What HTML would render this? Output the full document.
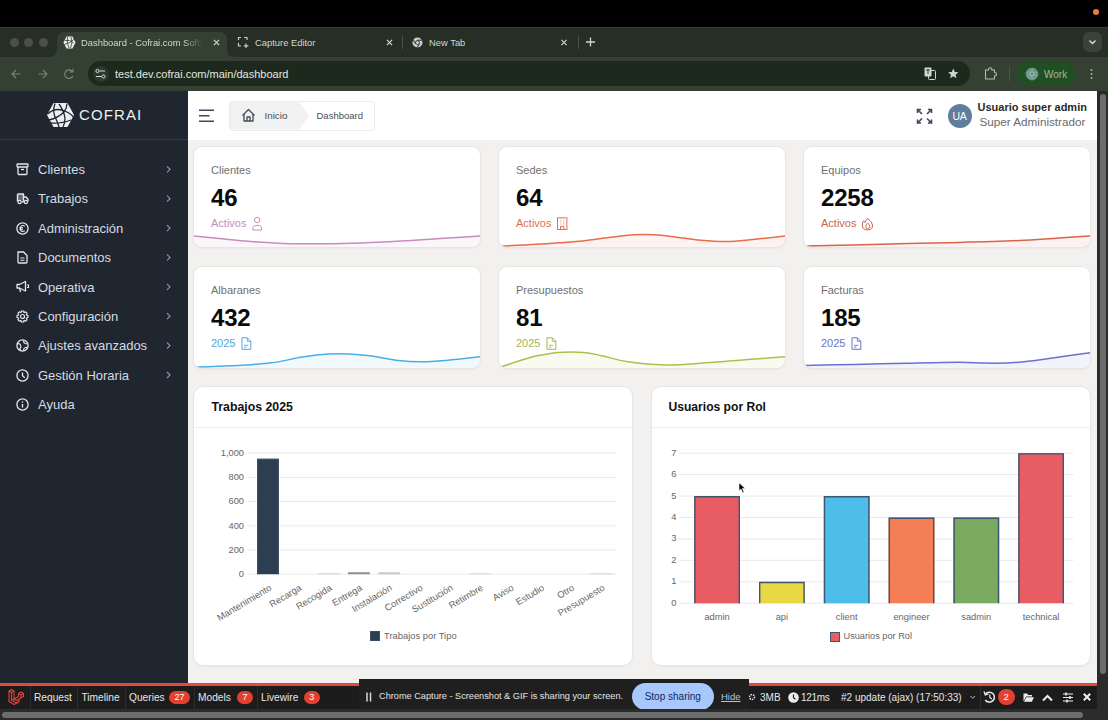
<!DOCTYPE html><html><head><meta charset="utf-8"><style>
*{box-sizing:border-box;margin:0;padding:0}
html,body{width:1108px;height:720px;overflow:hidden;background:#000;font-family:"Liberation Sans",sans-serif}
.a{position:absolute}
svg{position:absolute;overflow:visible}
.tabt{position:absolute;font-size:9.4px;color:#d3d8d1;white-space:nowrap}
.menu{position:absolute;left:38px;font-size:13px;color:#d6dbe1;white-space:nowrap}
.card{position:absolute;background:#fff;border:1px solid #e8e6e3;border-radius:9px;overflow:hidden;box-shadow:0 1px 2px rgba(0,0,0,0.04)}
.lbl{position:absolute;left:17px;top:17px;font-size:11px;color:#6f6f6f;white-space:nowrap}
.num{position:absolute;left:17px;top:36.5px;font-size:24px;font-weight:bold;color:#0b0b0b;letter-spacing:-0.2px}
.sub{position:absolute;left:17px;top:70px;font-size:11px;white-space:nowrap}
.dbt{position:absolute;top:692px;font-size:10.2px;color:#e6e6e6;white-space:nowrap}
.badge{position:absolute;top:691px;height:13px;border-radius:7px;background:#e3402f;color:#fff;font-size:9px;text-align:center;line-height:13px}
.yl{position:absolute;font-size:9.5px;color:#666;text-align:right;white-space:nowrap}
.xl{position:absolute;font-size:9.5px;color:#666;white-space:nowrap}
</style></head><body>
<div class="a" style="left:0;top:0;width:1108px;height:27px;background:#000"></div>
<div class="a" style="left:1093px;top:9px;width:6px;height:6px;border-radius:50%;background:#ee7c3c"></div>
<div class="a" style="left:0;top:27px;width:1108px;height:30px;background:#262e25"></div>
<div class="a" style="left:0;top:27px;width:1108px;height:1px;background:#363b35"></div>
<div class="a" style="left:0;top:57px;width:1108px;height:34px;background:#334032"></div>
<div class="a" style="left:9.5px;top:37.5px;width:9px;height:9px;border-radius:50%;background:#4d4f4b"></div>
<div class="a" style="left:24.0px;top:37.5px;width:9px;height:9px;border-radius:50%;background:#4d4f4b"></div>
<div class="a" style="left:38.5px;top:37.5px;width:9px;height:9px;border-radius:50%;background:#4d4f4b"></div>
<svg style="left:0;top:0" width="1108" height="91"><path d="M49,57 Q57,57 57,49 L57,40 Q57,32 65,32 L219,32 Q227,32 227,40 L227,49 Q227,57 235,57 Z" fill="#334032"/></svg>
<svg style="left:63px;top:36px" width="13" height="13" viewBox="0 0 26 26"><path d="M7,1 L19,1 L25,13 L19,25 L7,25 L1,13 Z" fill="#e8ebe7"/><path d="M4,9 Q13,6 21,14 M9,2 Q7,14 12,24 M3,17 Q14,14 23,6 M16,2 Q20,13 15,24" stroke="#333d33" stroke-width="1.6" fill="none"/></svg>
<div class="tabt" style="left:81px;top:36.5px;width:121px;overflow:hidden;-webkit-mask-image:linear-gradient(90deg,#000 85%,transparent)">Dashboard - Cofrai.com Software</div>
<svg style="left:0;top:0" width="1" height="1"><path d="M213.9,39.9 L219.1,45.1 M219.1,39.9 L213.9,45.1" stroke="#d0d5ce" stroke-width="1.2"/></svg>
<svg style="left:238px;top:37px" width="11" height="11"><path d="M0.5,3 L0.5,0.5 L3,0.5 M6,0.5 L9,0.5 L9,3 M0.5,6 L0.5,9 L3,9" stroke="#c9cec7" stroke-width="1.2" fill="none"/><path d="M8,6.5 L8,11 M5.8,8.8 L10.3,8.8" stroke="#c9cec7" stroke-width="1.2"/></svg>
<div class="tabt" style="left:255px;top:36.5px">Capture Editor</div>
<svg style="left:0;top:0" width="1" height="1"><path d="M386.9,39.9 L392.1,45.1 M392.1,39.9 L386.9,45.1" stroke="#d0d5ce" stroke-width="1.2"/></svg>
<div class="a" style="left:402px;top:36px;width:1px;height:13px;background:#4a5249"></div>
<svg style="left:412px;top:37px" width="11" height="11"><circle cx="5.5" cy="5.5" r="5" fill="#c9cec7"/><circle cx="5.5" cy="5.5" r="2.3" fill="#282e27"/><circle cx="5.5" cy="5.5" r="1.6" fill="#c9cec7"/><path d="M5.5,3.2 L10.3,3.2 M3.5,6.7 L1.2,2.6 M7.5,6.7 L5,10.6" stroke="#282e27" stroke-width="1"/></svg>
<div class="tabt" style="left:429px;top:36.5px">New Tab</div>
<svg style="left:0;top:0" width="1" height="1"><path d="M561.4,39.9 L566.6,45.1 M566.6,39.9 L561.4,45.1" stroke="#d0d5ce" stroke-width="1.2"/></svg>
<div class="a" style="left:578px;top:36px;width:1px;height:13px;background:#4a5249"></div>
<svg style="left:0;top:0" width="1" height="1"><path d="M590.5,37.5 L590.5,46.5 M586,42 L595,42" stroke="#d0d5ce" stroke-width="1.3"/></svg>
<div class="a" style="left:1083px;top:32px;width:19px;height:20px;border-radius:6px;background:#3a4239"></div>
<svg style="left:0;top:0" width="1" height="1"><path d="M1089.5,40.5 L1092.5,43.5 L1095.5,40.5" stroke="#d8dcd6" stroke-width="1.4" fill="none"/></svg>
<svg style="left:0;top:0" width="1" height="1"><path d="M12.5,74 L20.5,74 M16,70 L12,74 L16,78" stroke="#7b8179" stroke-width="1.1" fill="none"/><path d="M38.5,74 L46.5,74 M43,70 L47,74 L43,78" stroke="#7b8179" stroke-width="1.1" fill="none"/><path d="M72.6,71.8 A4.3,4.3 0 1 0 72.9,76" stroke="#838981" stroke-width="1.1" fill="none"/><path d="M73,68.8 L73,72 L69.8,72" stroke="#838981" stroke-width="1.1" fill="none"/></svg>
<div class="a" style="left:88px;top:61px;width:882px;height:25px;border-radius:12.5px;background:#1c291c"></div>
<div class="a" style="left:93px;top:65.5px;width:16px;height:16px;border-radius:50%;background:#2c382c"></div>
<svg style="left:0;top:0" width="1" height="1"><circle cx="97.5" cy="71" r="1.6" stroke="#d5dad3" stroke-width="1" fill="none"/><path d="M99.5,71 L105,71 M96,76.5 L101.5,76.5" stroke="#d5dad3" stroke-width="1.1"/><circle cx="103.5" cy="76.5" r="1.6" stroke="#d5dad3" stroke-width="1" fill="none"/></svg>
<div class="a" style="left:115px;top:67.5px;font-size:11px;color:#e2e7e0;white-space:nowrap">test.dev.cofrai.com/main/dashboard</div>
<svg style="left:0;top:0" width="1" height="1"><rect x="924.5" y="67.5" width="7" height="9" fill="#d0d5ce" rx="1"/><rect x="928.5" y="70.5" width="7" height="9" fill="none" stroke="#d0d5ce" stroke-width="1" rx="1"/><path d="M926,70 L930,70 M928,69 L928,74" stroke="#333" stroke-width="0.9"/><path d="M953.3,68.5 L954.8,72 L958.5,72.3 L955.6,74.7 L956.5,78.3 L953.3,76.3 L950.1,78.3 L951,74.7 L948.1,72.3 L951.8,72 Z" fill="#cfd4cd"/></svg>
<svg style="left:0;top:0" width="1" height="1"><path d="M985.5,70 L988.5,70 Q988.5,67.8 990.3,67.8 Q992,67.8 992,70 L994.5,70 L994.5,72.5 Q996.5,72.5 996.5,74.3 Q996.5,76 994.5,76 L994.5,79 L985.5,79 Z" stroke="#b5bab3" stroke-width="1.1" fill="none"/></svg>
<div class="a" style="left:1009px;top:67px;width:1px;height:14px;background:#4f584e"></div>
<div class="a" style="left:1017px;top:62px;width:58px;height:24px;border-radius:12px;background:#1f4f23"></div>
<svg style="left:1025px;top:67px" width="14" height="14"><circle cx="7" cy="7" r="6.5" fill="#5c8c7c"/><circle cx="7" cy="7" r="4.5" stroke="#c4d8d0" stroke-width="0.9" fill="none" stroke-dasharray="1.5 1"/><circle cx="7" cy="7" r="2.3" stroke="#c4d8d0" stroke-width="0.9" fill="none"/></svg>
<div class="a" style="left:1044px;top:68.5px;font-size:10px;color:#a7b4a4;white-space:nowrap">Work</div>
<svg style="left:0;top:0" width="1" height="1"><circle cx="1091.5" cy="70" r="1" fill="#a9aea7"/><circle cx="1091.5" cy="74" r="1" fill="#a9aea7"/><circle cx="1091.5" cy="78" r="1" fill="#a9aea7"/></svg>
<div class="a" style="left:0;top:91px;width:188px;height:592px;background:#1f2630"></div>
<div class="a" style="left:0;top:138.5px;width:188px;height:1px;background:#2f3c4d"></div>
<svg style="left:46px;top:102px" width="29" height="26" viewBox="0 0 29 26">
<path d="M7.5,1 L21.5,1 L28,13 L21.5,25 L7.5,25 L1,13 Z" fill="#ecedee"/>
<g stroke="#1f2630" stroke-width="1.3" fill="none">
<path d="M9,1.5 Q6,10 10,17 Q12,21 13,25"/>
<path d="M1.5,12 Q8,6 16,8 Q23,10 27.5,15"/>
<path d="M3,18 Q12,16 18,10 Q21,6 21,1.5"/>
<path d="M13,2 Q18,9 19,16 Q19,21 17,25"/>
<path d="M5,21 Q14,22 25,18"/>
</g></svg>
<div class="a" style="left:79px;top:106px;font-size:15px;color:#eef0f2;letter-spacing:1.1px;white-space:nowrap;font-weight:normal">COFRAI</div>
<svg style="left:15.5px;top:162.8px" width="13" height="13"><rect x="1" y="1" width="11" height="3" rx="0.8" stroke="#e4e8ec" stroke-width="1.3" fill="none"/><path d="M2,4 L2,10.5 Q2,11.5 3,11.5 L10,11.5 Q11,11.5 11,10.5 L11,4" stroke="#e4e8ec" stroke-width="1.3" fill="none"/><path d="M5,6.5 L8,6.5" stroke="#e4e8ec" stroke-width="1.3"/></svg>
<div class="menu" style="top:162.0px">Clientes</div>
<svg style="left:0;top:0" width="1" height="1"><path d="M167,166.3 L170,169.3 L167,172.3" stroke="#8f97bd" stroke-width="1.1" fill="none"/></svg>
<svg style="left:15.5px;top:192.2px" width="13" height="13"><path d="M1.5,9.5 L1.5,3 Q1.5,2 2.5,2 L7.5,2 L7.5,9.5 M7.5,5 L10,5 L12,7.3 L12,9.5" stroke="#e4e8ec" stroke-width="1.4" fill="none" stroke-linejoin="round"/><rect x="2" y="2.5" width="5" height="5.5" fill="#e4e8ec" opacity="0.35"/><path d="M5.2,9.8 L8.3,9.8" stroke="#e4e8ec" stroke-width="1.3"/><circle cx="3.6" cy="10" r="1.6" stroke="#e4e8ec" stroke-width="1.2" fill="#1f2630"/><circle cx="9.9" cy="10" r="1.6" stroke="#e4e8ec" stroke-width="1.2" fill="#1f2630"/></svg>
<div class="menu" style="top:191.4px">Trabajos</div>
<svg style="left:0;top:0" width="1" height="1"><path d="M167,195.7 L170,198.7 L167,201.7" stroke="#8f97bd" stroke-width="1.1" fill="none"/></svg>
<svg style="left:15.5px;top:221.6px" width="13" height="13"><circle cx="6.5" cy="6.5" r="5.6" stroke="#e4e8ec" stroke-width="1.3" fill="none"/><path d="M8.8,4.3 Q8,3.5 6.8,3.5 Q4.5,3.5 4.5,6.5 Q4.5,9.5 6.8,9.5 Q8,9.5 8.8,8.7 M3.3,5.8 L7,5.8 M3.3,7.3 L7,7.3" stroke="#e4e8ec" stroke-width="1.1" fill="none"/></svg>
<div class="menu" style="top:220.8px">Administración</div>
<svg style="left:0;top:0" width="1" height="1"><path d="M167,225.1 L170,228.1 L167,231.1" stroke="#8f97bd" stroke-width="1.1" fill="none"/></svg>
<svg style="left:15.5px;top:250.9px" width="13" height="13"><path d="M2,1 L7.5,1 L11,4.5 L11,11 Q11,12 10,12 L3,12 Q2,12 2,11 Z" stroke="#e4e8ec" stroke-width="1.3" fill="none"/><path d="M4.3,7 L8.5,7 M4.3,9.3 L8.5,9.3" stroke="#e4e8ec" stroke-width="1.1"/></svg>
<div class="menu" style="top:250.1px">Documentos</div>
<svg style="left:0;top:0" width="1" height="1"><path d="M167,254.4 L170,257.4 L167,260.4" stroke="#8f97bd" stroke-width="1.1" fill="none"/></svg>
<svg style="left:15.5px;top:280.3px" width="13" height="13"><path d="M1,4.5 L1,8 L3.5,8 L9.5,11 L9.5,1.5 L3.5,4.5 Z" stroke="#e4e8ec" stroke-width="1.3" fill="none" stroke-linejoin="round"/><path d="M3.5,8 L4.5,12" stroke="#e4e8ec" stroke-width="1.3"/><path d="M11,5 L12.5,5 L12.5,7.5 L11,7.5" stroke="#e4e8ec" stroke-width="1.1" fill="none"/></svg>
<div class="menu" style="top:279.5px">Operativa</div>
<svg style="left:0;top:0" width="1" height="1"><path d="M167,283.8 L170,286.8 L167,289.8" stroke="#8f97bd" stroke-width="1.1" fill="none"/></svg>
<svg style="left:15.5px;top:309.7px" width="13" height="13"><circle cx="6.5" cy="6.5" r="2" stroke="#e4e8ec" stroke-width="1.2" fill="none"/><path d="M5.5,1 L7.5,1 L8,2.6 L9.6,1.8 L11,3.2 L10.3,4.9 L12,5.5 L12,7.5 L10.3,8.1 L11,9.8 L9.6,11.2 L8,10.4 L7.5,12 L5.5,12 L5,10.4 L3.4,11.2 L2,9.8 L2.7,8.1 L1,7.5 L1,5.5 L2.7,4.9 L2,3.2 L3.4,1.8 L5,2.6 Z" stroke="#e4e8ec" stroke-width="1.2" fill="none" stroke-linejoin="round"/></svg>
<div class="menu" style="top:308.9px">Configuración</div>
<svg style="left:0;top:0" width="1" height="1"><path d="M167,313.2 L170,316.2 L167,319.2" stroke="#8f97bd" stroke-width="1.1" fill="none"/></svg>
<svg style="left:15.5px;top:339.1px" width="13" height="13"><circle cx="6.5" cy="6.5" r="5.6" stroke="#e4e8ec" stroke-width="1.3" fill="none"/><path d="M1.5,5 Q3.5,4 4.5,6 Q5.5,8 4,9.5 L4.5,11.5 M8,1.3 Q7,3.5 9,4.5 Q11,5 11.8,4.5 M7.5,11.8 Q7.5,9 9.5,8.5 Q11,8.3 11.5,9" stroke="#e4e8ec" stroke-width="1.2" fill="none"/></svg>
<div class="menu" style="top:338.3px">Ajustes avanzados</div>
<svg style="left:0;top:0" width="1" height="1"><path d="M167,342.6 L170,345.6 L167,348.6" stroke="#8f97bd" stroke-width="1.1" fill="none"/></svg>
<svg style="left:15.5px;top:368.5px" width="13" height="13"><circle cx="6.5" cy="6.5" r="5.6" stroke="#e4e8ec" stroke-width="1.3" fill="none"/><path d="M6.5,3.5 L6.5,6.8 L8.8,8.8" stroke="#e4e8ec" stroke-width="1.3" fill="none"/></svg>
<div class="menu" style="top:367.7px">Gestión Horaria</div>
<svg style="left:0;top:0" width="1" height="1"><path d="M167,372.0 L170,375.0 L167,378.0" stroke="#8f97bd" stroke-width="1.1" fill="none"/></svg>
<svg style="left:15.5px;top:397.8px" width="13" height="13"><circle cx="6.5" cy="6.5" r="5.6" stroke="#e4e8ec" stroke-width="1.3" fill="none"/><path d="M6.5,6 L6.5,9.5" stroke="#e4e8ec" stroke-width="1.4"/><circle cx="6.5" cy="4" r="0.8" fill="#e4e8ec"/></svg>
<div class="menu" style="top:397.0px">Ayuda</div>
<div class="a" style="left:188px;top:91px;width:909px;height:592px;background:#f2f1ef"></div>
<div class="a" style="left:188px;top:91px;width:909px;height:49px;background:#fff"></div>
<svg style="left:0;top:0" width="1" height="1"><path d="M199,110.3 L214,110.3 M199,115.8 L209.5,115.8 M199,121.2 L214,121.2" stroke="#3b4a5c" stroke-width="1.6"/></svg>
<div class="a" style="left:229px;top:100.5px;width:146px;height:30px;border:1px solid #ebebeb;border-radius:4px;background:#fff"></div>
<svg style="left:0;top:0" width="1" height="1"><path d="M230,101.5 L299,101.5 L309,115.5 L299,129.5 L230,129.5 Z" fill="#f1f1f1"/></svg>
<svg style="left:0;top:0" width="1" height="1"><path d="M242.5,115.5 L248.5,109.5 L254.5,115.5 M244,114 L244,121 L253,121 L253,114 M247,121 L247,117 L250,117 L250,121" stroke="#3d4b5b" stroke-width="1.3" fill="none" stroke-linejoin="round"/></svg>
<div class="a" style="left:264.5px;top:110px;font-size:9.8px;color:#4d4d4d;white-space:nowrap">Inicio</div>
<div class="a" style="left:316.5px;top:110px;font-size:9.5px;color:#4d4d4d;white-space:nowrap">Dashboard</div>
<svg style="left:0;top:0" width="1" height="1"><g stroke="#3b4a5c" stroke-width="1.6" fill="none"><path d="M917.5,109.5 L922,114 M917.5,113 L917.5,109.5 L921,109.5"/><path d="M931.5,109.5 L927,114 M928,109.5 L931.5,109.5 L931.5,113"/><path d="M917.5,123 L922,118.5 M917.5,119.5 L917.5,123 L921,123"/><path d="M931.5,123 L927,118.5 M928,123 L931.5,123 L931.5,119.5"/></g></svg>
<div class="a" style="left:947.5px;top:103.5px;width:24px;height:24px;border-radius:50%;background:#5f7d9c;color:#fff;font-size:10.5px;text-align:center;line-height:24px;letter-spacing:-0.3px">UA</div>
<div class="a" style="left:977.5px;top:101px;font-size:11px;font-weight:bold;color:#2b2b2b;white-space:nowrap">Usuario super admin</div>
<div class="a" style="left:979.5px;top:114.8px;font-size:11.7px;color:#6b6b6b;white-space:nowrap">Super Administrador</div>
<div class="card" style="left:193px;top:146px;width:288px;height:102px">
<svg class="spark" style="left:-1px;top:-1px" width="290" height="104"><path d="M0.0,89.9 C4.3,90.3 17.3,91.6 26.0,92.5 C34.7,93.4 41.2,94.3 52.0,95.1 C62.8,95.9 78.0,97.0 91.0,97.4 C104.0,97.8 117.0,97.8 130.0,97.7 C143.0,97.6 156.0,97.3 169.0,96.9 C182.0,96.5 195.0,95.8 208.0,95.1 C221.0,94.4 233.3,93.4 247.0,92.5 C260.7,91.6 282.8,90.2 290.0,89.7 L290,104 L0,104 Z" fill="#c98bc0" fill-opacity="0.08"/><path d="M0.0,89.9 C4.3,90.3 17.3,91.6 26.0,92.5 C34.7,93.4 41.2,94.3 52.0,95.1 C62.8,95.9 78.0,97.0 91.0,97.4 C104.0,97.8 117.0,97.8 130.0,97.7 C143.0,97.6 156.0,97.3 169.0,96.9 C182.0,96.5 195.0,95.8 208.0,95.1 C221.0,94.4 233.3,93.4 247.0,92.5 C260.7,91.6 282.8,90.2 290.0,89.7" stroke="#c98bc0" stroke-width="1.5" fill="none"/></svg>
<div class="lbl" style="top:17px">Clientes</div>
<div class="num" style="top:36.5px">46</div>
<div class="sub" style="color:#c68cbf;top:70px">Activos</div>
<svg style="left:58px;top:69.5px" width="11" height="14"><circle cx="5.2" cy="3" r="2.7" stroke="#c68cbf" stroke-width="1" fill="none"/><path d="M0.8,13 Q0.2,8.3 5.2,8.3 Q10.2,8.3 9.6,13 Z" stroke="#c68cbf" stroke-width="1" fill="none" stroke-linejoin="round"/></svg>
</div>
<div class="card" style="left:498px;top:146px;width:288px;height:102px">
<svg class="spark" style="left:-1px;top:-1px" width="290" height="104"><path d="M0.0,100.2 C6.5,99.9 26.0,99.0 39.0,98.2 C52.0,97.4 66.3,96.7 78.0,95.6 C89.7,94.5 99.7,92.8 109.2,91.7 C118.7,90.6 127.4,89.3 135.2,88.8 C143.0,88.3 149.1,88.4 156.0,88.8 C162.9,89.2 169.0,90.0 176.8,90.9 C184.6,91.8 194.2,93.5 202.8,94.3 C211.5,95.1 220.0,95.7 228.7,95.6 C237.3,95.5 244.5,94.5 254.7,93.5 C264.9,92.5 284.1,90.3 290.0,89.7 L290,104 L0,104 Z" fill="#e96c4b" fill-opacity="0.08"/><path d="M0.0,100.2 C6.5,99.9 26.0,99.0 39.0,98.2 C52.0,97.4 66.3,96.7 78.0,95.6 C89.7,94.5 99.7,92.8 109.2,91.7 C118.7,90.6 127.4,89.3 135.2,88.8 C143.0,88.3 149.1,88.4 156.0,88.8 C162.9,89.2 169.0,90.0 176.8,90.9 C184.6,91.8 194.2,93.5 202.8,94.3 C211.5,95.1 220.0,95.7 228.7,95.6 C237.3,95.5 244.5,94.5 254.7,93.5 C264.9,92.5 284.1,90.3 290.0,89.7" stroke="#e96c4b" stroke-width="1.5" fill="none"/></svg>
<div class="lbl" style="top:17px">Sedes</div>
<div class="num" style="top:36.5px">64</div>
<div class="sub" style="color:#e2704f;top:70px">Activos</div>
<svg style="left:58px;top:70px" width="11" height="13"><rect x="0.5" y="0.8" width="9.4" height="11.7" stroke="#e2704f" stroke-width="1" fill="none"/><path d="M3.2,3 L4.4,3 M6,3 L7.2,3 M3.2,5 L4.4,5 M6,5 L7.2,5 M3.2,7 L4.4,7 M6,7 L7.2,7" stroke="#e2704f" stroke-width="0.9" stroke-opacity="0.7"/><path d="M3.5,12.5 L3.5,9.5 L6.9,9.5 L6.9,12.5" stroke="#e2704f" stroke-width="1" fill="none"/></svg>
</div>
<div class="card" style="left:803px;top:146px;width:288px;height:102px">
<svg class="spark" style="left:-1px;top:-1px" width="290" height="104"><path d="M0.0,100.1 C13.0,99.8 52.0,98.8 78.0,98.2 C104.0,97.6 132.2,97.1 156.0,96.4 C179.8,95.8 203.7,95.1 221.0,94.3 C238.3,93.5 248.5,92.5 260.0,91.7 C271.5,90.9 285.0,90.0 290.0,89.7 L290,104 L0,104 Z" fill="#d8654a" fill-opacity="0.08"/><path d="M0.0,100.1 C13.0,99.8 52.0,98.8 78.0,98.2 C104.0,97.6 132.2,97.1 156.0,96.4 C179.8,95.8 203.7,95.1 221.0,94.3 C238.3,93.5 248.5,92.5 260.0,91.7 C271.5,90.9 285.0,90.0 290.0,89.7" stroke="#d8654a" stroke-width="1.5" fill="none"/></svg>
<div class="lbl" style="top:17px">Equipos</div>
<div class="num" style="top:36.5px">2258</div>
<div class="sub" style="color:#c9664b;top:70px">Activos</div>
<svg style="left:57.5px;top:70.5px" width="12" height="13"><path d="M5.5,0.6 Q9.8,3.3 10.5,6.8 Q11,11.9 5.5,11.9 Q0.2,11.9 0.3,7 Q0.4,4.5 1.5,2.8 L3,4.6 Q3.8,2 5.5,0.6 Z" stroke="#c9664b" stroke-width="1" fill="none" stroke-linejoin="round"/><path d="M5.7,5 Q8.2,7 7.8,9 Q7.4,10.6 5.6,10.6 Q3.7,10.6 3.7,8.9 Q3.7,7 5.7,5 Z" stroke="#c9664b" stroke-width="0.9" fill="none"/></svg>
</div>
<div class="card" style="left:193px;top:265.5px;width:288px;height:103px">
<svg class="spark" style="left:-1px;top:-1px" width="290" height="104"><path d="M0.0,101.1 C6.5,100.9 26.0,100.4 39.0,99.7 C52.0,99.0 66.3,98.2 78.0,96.8 C89.7,95.4 99.7,92.6 109.2,91.1 C118.7,89.6 127.4,88.5 135.2,88.0 C143.0,87.5 149.1,87.7 156.0,88.0 C162.9,88.3 169.0,88.8 176.8,89.8 C184.6,90.8 194.2,93.2 202.8,94.2 C211.5,95.2 220.0,95.8 228.7,95.8 C237.3,95.8 244.5,95.1 254.7,94.2 C264.9,93.3 284.1,91.0 290.0,90.4 L290,104 L0,104 Z" fill="#4aaee6" fill-opacity="0.08"/><path d="M0.0,101.1 C6.5,100.9 26.0,100.4 39.0,99.7 C52.0,99.0 66.3,98.2 78.0,96.8 C89.7,95.4 99.7,92.6 109.2,91.1 C118.7,89.6 127.4,88.5 135.2,88.0 C143.0,87.5 149.1,87.7 156.0,88.0 C162.9,88.3 169.0,88.8 176.8,89.8 C184.6,90.8 194.2,93.2 202.8,94.2 C211.5,95.2 220.0,95.8 228.7,95.8 C237.3,95.8 244.5,95.1 254.7,94.2 C264.9,93.3 284.1,91.0 290.0,90.4" stroke="#4aaee6" stroke-width="1.5" fill="none"/></svg>
<div class="lbl" style="top:17.6px">Albaranes</div>
<div class="num" style="top:37.1px">432</div>
<div class="sub" style="color:#4ea9e0;top:70.8px">2025</div>
<svg style="left:46.5px;top:70px" width="11" height="13"><path d="M1,0.8 L6.3,0.8 L9.8,4.3 L9.8,12.3 L1,12.3 Z" stroke="#4ea9e0" stroke-width="1" fill="none" stroke-linejoin="round"/><path d="M6.3,0.8 L6.3,4.3 L9.8,4.3" stroke="#4ea9e0" stroke-width="0.9" fill="none"/><path d="M3,8.3 L7.3,8.3 M3,10.2 L5.3,10.2" stroke="#4ea9e0" stroke-width="0.9" fill="none"/></svg>
</div>
<div class="card" style="left:498px;top:265.5px;width:288px;height:103px">
<svg class="spark" style="left:-1px;top:-1px" width="290" height="104"><path d="M0.0,101.9 C3.5,100.7 14.3,97.0 20.8,95.0 C27.3,93.0 32.5,91.2 39.0,89.8 C45.5,88.4 52.0,87.0 59.8,86.4 C67.6,85.8 78.4,85.8 85.8,86.4 C93.2,87.0 96.6,88.2 104.0,89.8 C111.4,91.4 119.6,94.3 130.0,95.8 C140.4,97.3 153.4,98.7 166.4,98.9 C179.4,99.1 194.6,97.7 208.0,96.8 C221.4,95.9 233.3,94.8 247.0,93.7 C260.7,92.6 282.8,91.0 290.0,90.4 L290,104 L0,104 Z" fill="#b3bd4a" fill-opacity="0.08"/><path d="M0.0,101.9 C3.5,100.7 14.3,97.0 20.8,95.0 C27.3,93.0 32.5,91.2 39.0,89.8 C45.5,88.4 52.0,87.0 59.8,86.4 C67.6,85.8 78.4,85.8 85.8,86.4 C93.2,87.0 96.6,88.2 104.0,89.8 C111.4,91.4 119.6,94.3 130.0,95.8 C140.4,97.3 153.4,98.7 166.4,98.9 C179.4,99.1 194.6,97.7 208.0,96.8 C221.4,95.9 233.3,94.8 247.0,93.7 C260.7,92.6 282.8,91.0 290.0,90.4" stroke="#b3bd4a" stroke-width="1.5" fill="none"/></svg>
<div class="lbl" style="top:17.6px">Presupuestos</div>
<div class="num" style="top:37.1px">81</div>
<div class="sub" style="color:#a8b44c;top:70.8px">2025</div>
<svg style="left:46.5px;top:70px" width="11" height="13"><path d="M1,0.8 L6.3,0.8 L9.8,4.3 L9.8,12.3 L1,12.3 Z" stroke="#a8b44c" stroke-width="1" fill="none" stroke-linejoin="round"/><path d="M6.3,0.8 L6.3,4.3 L9.8,4.3" stroke="#a8b44c" stroke-width="0.9" fill="none"/><path d="M3,8.3 L7.3,8.3 M3,10.2 L5.3,10.2" stroke="#a8b44c" stroke-width="0.9" fill="none"/></svg>
</div>
<div class="card" style="left:803px;top:265.5px;width:288px;height:103px">
<svg class="spark" style="left:-1px;top:-1px" width="290" height="104"><path d="M0.0,99.5 C8.7,99.3 34.7,98.8 52.0,98.4 C69.3,98.0 86.7,97.7 104.0,97.3 C121.3,96.9 143.0,96.3 156.0,96.3 C169.0,96.3 173.3,97.0 182.0,97.1 C190.7,97.2 199.3,97.3 208.0,96.8 C216.7,96.3 225.3,95.2 234.0,94.2 C242.7,93.2 250.7,91.9 260.0,90.6 C269.3,89.3 285.0,86.9 290.0,86.2 L290,104 L0,104 Z" fill="#6b6fd2" fill-opacity="0.08"/><path d="M0.0,99.5 C8.7,99.3 34.7,98.8 52.0,98.4 C69.3,98.0 86.7,97.7 104.0,97.3 C121.3,96.9 143.0,96.3 156.0,96.3 C169.0,96.3 173.3,97.0 182.0,97.1 C190.7,97.2 199.3,97.3 208.0,96.8 C216.7,96.3 225.3,95.2 234.0,94.2 C242.7,93.2 250.7,91.9 260.0,90.6 C269.3,89.3 285.0,86.9 290.0,86.2" stroke="#6b6fd2" stroke-width="1.5" fill="none"/></svg>
<div class="lbl" style="top:17.6px">Facturas</div>
<div class="num" style="top:37.1px">185</div>
<div class="sub" style="color:#6c70c8;top:70.8px">2025</div>
<svg style="left:46.5px;top:70px" width="11" height="13"><path d="M1,0.8 L6.3,0.8 L9.8,4.3 L9.8,12.3 L1,12.3 Z" stroke="#6c70c8" stroke-width="1" fill="none" stroke-linejoin="round"/><path d="M6.3,0.8 L6.3,4.3 L9.8,4.3" stroke="#6c70c8" stroke-width="0.9" fill="none"/><path d="M3,8.3 L7.3,8.3 M3,10.2 L5.3,10.2" stroke="#6c70c8" stroke-width="0.9" fill="none"/></svg>
</div>
<div class="card" style="left:193px;top:386.4px;width:440px;height:280px;border-radius:10px"></div>
<div class="a" style="left:194px;top:427px;width:438px;height:1px;background:#f0efed"></div>
<div class="card" style="left:651px;top:386.4px;width:440px;height:280px;border-radius:10px"></div>
<div class="a" style="left:652px;top:427px;width:438px;height:1px;background:#f0efed"></div>
<div class="a" style="left:211.5px;top:399.5px;font-size:12.3px;font-weight:bold;color:#111;white-space:nowrap">Trabajos 2025</div>
<div class="a" style="left:668.5px;top:399.5px;font-size:12.1px;font-weight:bold;color:#111;white-space:nowrap">Usuarios por Rol</div>
<svg style="left:0;top:0" width="1" height="1"><path d="M247.5,574.2 L616.5,574.2" stroke="#e9e9e9" stroke-width="1"/><path d="M247.5,550.0 L616.5,550.0" stroke="#e9e9e9" stroke-width="1"/><path d="M247.5,525.8 L616.5,525.8" stroke="#e9e9e9" stroke-width="1"/><path d="M247.5,501.5 L616.5,501.5" stroke="#e9e9e9" stroke-width="1"/><path d="M247.5,477.3 L616.5,477.3" stroke="#e9e9e9" stroke-width="1"/><path d="M247.5,453.1 L616.5,453.1" stroke="#e9e9e9" stroke-width="1"/><rect x="257.0" y="458.8" width="21.8" height="115.4" fill="#2c3e50"/><path d="M257.6,574.2 L257.6,459.4 L278.3,459.4 L278.3,574.2" stroke="#3b4f66" stroke-width="1.2" fill="none"/><rect x="317.7" y="573.0" width="21.8" height="1.2" fill="#2c3e50" fill-opacity="0.15"/><rect x="348.0" y="572.2" width="21.8" height="2" fill="#2c3e50" fill-opacity="0.55"/><rect x="378.4" y="572.2" width="21.8" height="2" fill="#2c3e50" fill-opacity="0.25"/><rect x="469.4" y="573.0" width="21.8" height="1.2" fill="#2c3e50" fill-opacity="0.12"/><rect x="590.7" y="573.0" width="21.8" height="1.2" fill="#2c3e50" fill-opacity="0.12"/></svg>
<div class="yl" style="left:200px;width:44px;top:569.0px;font-size:9.3px">0</div>
<div class="yl" style="left:200px;width:44px;top:544.8px;font-size:9.3px">200</div>
<div class="yl" style="left:200px;width:44px;top:520.6px;font-size:9.3px">400</div>
<div class="yl" style="left:200px;width:44px;top:496.3px;font-size:9.3px">600</div>
<div class="yl" style="left:200px;width:44px;top:472.1px;font-size:9.3px">800</div>
<div class="yl" style="left:200px;width:44px;top:447.9px;font-size:9.3px">1,000</div>
<div class="xl" style="right:838.0px;top:580.6px;transform-origin:100% 50%;transform:rotate(-31deg);font-size:9.4px">Mantenimiento</div>
<div class="xl" style="right:807.7px;top:580.6px;transform-origin:100% 50%;transform:rotate(-31deg);font-size:9.4px">Recarga</div>
<div class="xl" style="right:777.4px;top:580.6px;transform-origin:100% 50%;transform:rotate(-31deg);font-size:9.4px">Recogida</div>
<div class="xl" style="right:747.0px;top:580.6px;transform-origin:100% 50%;transform:rotate(-31deg);font-size:9.4px">Entrega</div>
<div class="xl" style="right:716.7px;top:580.6px;transform-origin:100% 50%;transform:rotate(-31deg);font-size:9.4px">Instalación</div>
<div class="xl" style="right:686.4px;top:580.6px;transform-origin:100% 50%;transform:rotate(-31deg);font-size:9.4px">Correctivo</div>
<div class="xl" style="right:656.1px;top:580.6px;transform-origin:100% 50%;transform:rotate(-31deg);font-size:9.4px">Sustitución</div>
<div class="xl" style="right:625.7px;top:580.6px;transform-origin:100% 50%;transform:rotate(-31deg);font-size:9.4px">Retimbre</div>
<div class="xl" style="right:595.4px;top:580.6px;transform-origin:100% 50%;transform:rotate(-31deg);font-size:9.4px">Aviso</div>
<div class="xl" style="right:565.1px;top:580.6px;transform-origin:100% 50%;transform:rotate(-31deg);font-size:9.4px">Estudio</div>
<div class="xl" style="right:534.7px;top:580.6px;transform-origin:100% 50%;transform:rotate(-31deg);font-size:9.4px">Otro</div>
<div class="xl" style="right:504.4px;top:580.6px;transform-origin:100% 50%;transform:rotate(-31deg);font-size:9.4px">Presupuesto</div>
<div class="a" style="left:370px;top:631.3px;width:10px;height:10px;background:#2c3e50;border:1px solid #3a4e64"></div>
<div class="xl" style="left:384px;top:630px;font-size:9.4px">Trabajos por Tipo</div>
<svg style="left:0;top:0" width="1" height="1"><path d="M679,603.2 L1073.5,603.2" stroke="#e9e9e9" stroke-width="1"/><path d="M679,581.8 L1073.5,581.8" stroke="#e9e9e9" stroke-width="1"/><path d="M679,560.3 L1073.5,560.3" stroke="#e9e9e9" stroke-width="1"/><path d="M679,538.9 L1073.5,538.9" stroke="#e9e9e9" stroke-width="1"/><path d="M679,517.5 L1073.5,517.5" stroke="#e9e9e9" stroke-width="1"/><path d="M679,496.1 L1073.5,496.1" stroke="#e9e9e9" stroke-width="1"/><path d="M679,474.6 L1073.5,474.6" stroke="#e9e9e9" stroke-width="1"/><path d="M679,453.2 L1073.5,453.2" stroke="#e9e9e9" stroke-width="1"/><rect x="694.2" y="496.1" width="45.8" height="107.2" fill="#e85d63"/><path d="M694.9,603.2 L694.9,496.8 L739.3,496.8 L739.3,603.2" stroke="#3e5670" stroke-width="1.4" fill="none"/><rect x="759.0" y="581.8" width="45.8" height="21.4" fill="#e8d944"/><path d="M759.7,603.2 L759.7,582.5 L804.1,582.5 L804.1,603.2" stroke="#3e5670" stroke-width="1.4" fill="none"/><rect x="823.8" y="496.1" width="45.8" height="107.2" fill="#4dbde9"/><path d="M824.5,603.2 L824.5,496.8 L868.9,496.8 L868.9,603.2" stroke="#3e5670" stroke-width="1.4" fill="none"/><rect x="888.6" y="517.5" width="45.8" height="85.7" fill="#f47f56"/><path d="M889.3,603.2 L889.3,518.2 L933.7,518.2 L933.7,603.2" stroke="#3e5670" stroke-width="1.4" fill="none"/><rect x="953.4" y="517.5" width="45.8" height="85.7" fill="#79aa60"/><path d="M954.1,603.2 L954.1,518.2 L998.5,518.2 L998.5,603.2" stroke="#3e5670" stroke-width="1.4" fill="none"/><rect x="1018.2" y="453.2" width="45.8" height="150.0" fill="#e85d63"/><path d="M1018.9,603.2 L1018.9,453.9 L1063.3,453.9 L1063.3,603.2" stroke="#3e5670" stroke-width="1.4" fill="none"/></svg>
<div class="yl" style="left:640.5px;width:36px;top:596.7px;font-size:9.4px">0</div>
<div class="yl" style="left:640.5px;width:36px;top:575.3px;font-size:9.4px">1</div>
<div class="yl" style="left:640.5px;width:36px;top:553.8px;font-size:9.4px">2</div>
<div class="yl" style="left:640.5px;width:36px;top:532.4px;font-size:9.4px">3</div>
<div class="yl" style="left:640.5px;width:36px;top:511.0px;font-size:9.4px">4</div>
<div class="yl" style="left:640.5px;width:36px;top:489.6px;font-size:9.4px">5</div>
<div class="yl" style="left:640.5px;width:36px;top:468.1px;font-size:9.4px">6</div>
<div class="yl" style="left:640.5px;width:36px;top:446.7px;font-size:9.4px">7</div>
<div class="xl" style="left:677.1px;width:80px;text-align:center;top:611.9px;font-size:9.3px">admin</div>
<div class="xl" style="left:741.9px;width:80px;text-align:center;top:611.9px;font-size:9.3px">api</div>
<div class="xl" style="left:806.7px;width:80px;text-align:center;top:611.9px;font-size:9.3px">client</div>
<div class="xl" style="left:871.5px;width:80px;text-align:center;top:611.9px;font-size:9.3px">engineer</div>
<div class="xl" style="left:936.3px;width:80px;text-align:center;top:611.9px;font-size:9.3px">sadmin</div>
<div class="xl" style="left:1001.1px;width:80px;text-align:center;top:611.9px;font-size:9.3px">technical</div>
<div class="a" style="left:830px;top:631.5px;width:10px;height:10px;background:#e85d63;border:1.5px solid #3e5670"></div>
<div class="xl" style="left:843.5px;top:630.5px;font-size:9.2px">Usuarios por Rol</div>
<svg style="left:0;top:0" width="1" height="1"><path d="M739,482.8 L739,490.8 L741,488.9 L742.6,492.8 L744,492.2 L742.4,488.4 L745.2,488.4 Z" fill="#000" stroke="#fff" stroke-width="0.6" stroke-linejoin="round"/></svg>
<div class="a" style="left:0;top:683px;width:1097px;height:3px;background:#e8473a"></div>
<div class="a" style="left:0;top:686px;width:1097px;height:23px;background:#1c1c1c"></div>
<svg style="left:7.5px;top:688.5px" width="17" height="17" viewBox="0 0 17 17"><g stroke="#e0443a" stroke-width="1.1" fill="none" stroke-linejoin="round"><path d="M1,2 L3.5,0.6 L6,2 L6,10 L10.5,7.5 L10.5,4.5 L13,3 L15.5,4.5 L15.5,7.5 L11,10 L11,12.8 L6.2,15.5 L1,12.5 Z"/><path d="M1,2 L3.5,3.4 L6,2 M3.5,3.4 L3.5,11.2 L6,10 M3.5,11.2 L8.5,14 L11,12.8 M10.5,4.5 L13,6 L15.5,4.5 M13,6 L13,8.8 M6,10 L8.5,11.5 L11,10"/></g></svg>
<div class="a" style="left:30px;top:686px;width:1px;height:23px;background:#2c2c2c"></div>
<div class="a" style="left:76.5px;top:686px;width:1px;height:23px;background:#2c2c2c"></div>
<div class="a" style="left:124.5px;top:686px;width:1px;height:23px;background:#2c2c2c"></div>
<div class="a" style="left:193.5px;top:686px;width:1px;height:23px;background:#2c2c2c"></div>
<div class="a" style="left:256.5px;top:686px;width:1px;height:23px;background:#2c2c2c"></div>
<div class="dbt" style="left:34px">Request</div>
<div class="dbt" style="left:81.5px">Timeline</div>
<div class="dbt" style="left:129px">Queries</div>
<div class="dbt" style="left:198px">Models</div>
<div class="dbt" style="left:261px">Livewire</div>
<div class="badge" style="left:169px;width:21px">27</div>
<div class="badge" style="left:237px;width:16px">7</div>
<div class="badge" style="left:303.5px;width:16.5px">3</div>
<svg style="left:0;top:0" width="1" height="1"><circle cx="752" cy="697" r="2.5" stroke="#e6e6e6" stroke-width="1.5" fill="none" stroke-dasharray="1.5 1"/></svg>
<div class="dbt" style="left:760px;font-size:10px">3MB</div>
<svg style="left:788px;top:691.5px" width="11" height="11"><circle cx="5.5" cy="5.5" r="5.3" fill="#ececec"/><path d="M5.5,2.5 L5.5,5.8 L7.5,7.3" stroke="#1c1c1c" stroke-width="1.2" fill="none"/></svg>
<div class="dbt" style="left:801px;font-size:10px;letter-spacing:-0.3px">121ms</div>
<div class="dbt" style="left:841px;font-size:10px">#2 update (ajax) (17:50:33)</div>
<svg style="left:0;top:0" width="1" height="1"><path d="M970.5,696 L972.8,698.3 L975.1,696" stroke="#bdbdbd" stroke-width="1" fill="none"/></svg>
<div class="a" style="left:980px;top:686px;width:1px;height:23px;background:#2c2c2c"></div>
<svg style="left:0;top:0" width="1" height="1"><path d="M985.5,694 A5,5 0 1 1 985.3,700" stroke="#ececec" stroke-width="1.5" fill="none"/><path d="M984,691.5 L985.3,695 L988.5,694" stroke="#ececec" stroke-width="1.3" fill="none"/><path d="M989.8,694.5 L989.8,697.5 L991.8,699" stroke="#ececec" stroke-width="1.2" fill="none"/></svg>
<div class="badge" style="left:998px;width:16.5px;top:689px;height:16px;border-radius:8px;line-height:16px;font-size:9.5px">2</div>
<svg style="left:0;top:0" width="1" height="1"><path d="M1023.5,693.5 L1027,693.5 L1028.3,695 L1032,695 L1032,696.5 L1026,696.5 L1023.5,701.5 Z" fill="#ececec"/><path d="M1026.3,697.3 L1034,697.3 L1031.8,701.8 L1024,701.8 Z" fill="#ececec"/></svg>
<svg style="left:0;top:0" width="1" height="1"><path d="M1043,700.5 L1047.5,696 L1052,700.5" stroke="#ececec" stroke-width="2" fill="none"/></svg>
<svg style="left:0;top:0" width="1" height="1"><path d="M1063,694 L1073,694 M1063,697.5 L1073,697.5 M1063,701 L1073,701" stroke="#ececec" stroke-width="1.2"/><path d="M1066,692.5 L1066,695.5 M1070,696 L1070,699 M1067,699.5 L1067,702.5" stroke="#ececec" stroke-width="1.6"/></svg>
<svg style="left:0;top:0" width="1" height="1"><path d="M1083.8,693.8 L1090.2,700.2 M1090.2,693.8 L1083.8,700.2" stroke="#f0f0f0" stroke-width="2"/></svg>
<div class="a" style="left:359px;top:679px;width:390px;height:34.5px;background:#1f1f1f"></div>
<svg style="left:0;top:0" width="1" height="1"><path d="M367,692.5 L367,701.5 M370.5,692.5 L370.5,701.5" stroke="#d8d8d8" stroke-width="1.5"/></svg>
<div class="a" style="left:379px;top:691px;font-size:9.2px;color:#e3e3e3;white-space:nowrap">Chrome Capture - Screenshot &amp; GIF is sharing your screen.</div>
<div class="a" style="left:631.5px;top:683px;width:82.5px;height:27px;border-radius:13.5px;background:#a8c7fa;color:#0a2b5e;font-size:10px;text-align:center;line-height:27px">Stop sharing</div>
<div class="a" style="left:721px;top:691px;font-size:9.5px;color:#a8c7fa;text-decoration:underline;white-space:nowrap">Hide</div>
<div class="a" style="left:1097px;top:91px;width:11px;height:629px;background:#2b2b2b"></div>
<div class="a" style="left:1099.5px;top:93.5px;width:6px;height:580px;border-radius:3px;background:#6d6d6d"></div>
<div class="a" style="left:0;top:709px;width:1097px;height:11px;background:#2b2b2b"></div>
<div class="a" style="left:2px;top:711.7px;width:1081px;height:6.5px;border-radius:3.25px;background:#6d6d6d"></div>
</body></html>
